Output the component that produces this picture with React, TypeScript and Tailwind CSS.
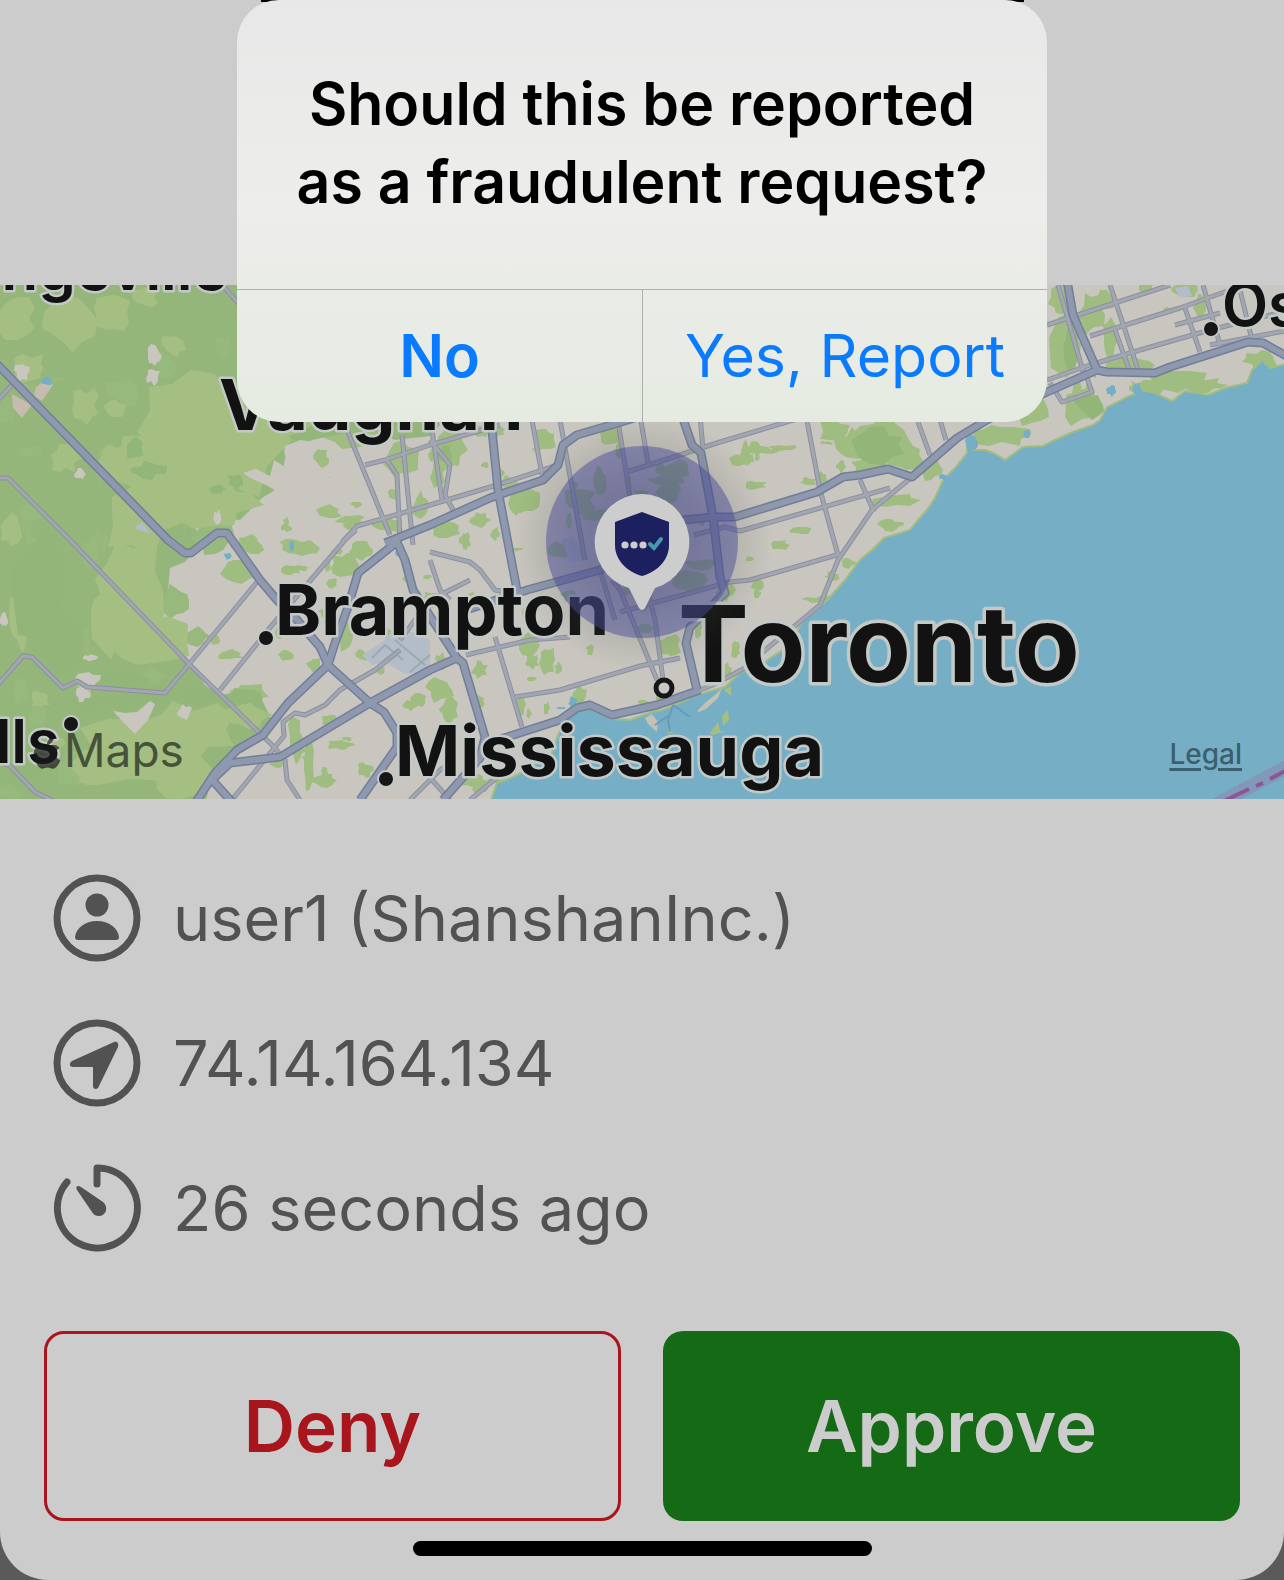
import type { ReactNode } from 'react';
import { FaApple } from 'react-icons/fa';

type Patch = [x: number, y: number, rx: number, ry: number];

const HIGHWAYS = [
  'M-5 362L168 540L185 553L191 553L217 533L227 533L260 580L277 600L297 620L320 647L328 665L370 703L384 712L397 733V747L360 800',
  'M457 658L413 590L405 560L397 542L358 573L348 607L335 643L328 665L288 703L263 735L237 750L215 773L196 802',
  'M232 802L214 782L209 778M212 780L230 763L280 757L370 703L430 670L457 658L463 663L485 737L480 758L443 800',
  'M385 543L430 525L490 498L507 492L543 480L558 465L563 445L577 435L618 423L660 410',
  'M490 410L498 490L508 543L517 590',
  'M460 612L527 590L600 570L650 535L683 520L713 517L735 517L817 492L843 477L860 475L888 469L912 477L957 438L987 420L1047 392L1097 370L1107 372L1155 373L1170 367L1248 342L1263 343L1290 358',
  'M1067 280L1073 315L1097 370',
  'M680 410L692 445L701 453L713 517L720 577L725 593L690 627L686 643L697 690',
  'M490 742L507 737L560 720L577 708L590 705L612 715L657 705L700 690',
];

const ROADS = [
  'M-5 478L8 478L20 490L70 540L190 665L274 747L285 760L287 780L300 800',
  'M-5 688L23 656L32 657L63 688L77 681L87 687L165 693L190 663L257 582',
  'M220 690L268 630L345 540L356 530',
  'M-5 760L10 766L35 792L60 804',
  'M-5 403L12 385',
  'M222 285L240 305',
  'M700 690L715 684L745 668L770 646L790 630L820 605L838 560L872 510L890 495L912 477',
  'M617 415L640 560L655 620L663 680M612 580L620 590L657 680',
  'M345 425L390 535M432 430L442 500M402 435L413 545M365 465L385 460L430 445L500 425',
  'M342 542L357 526L430 505L497 485L558 465M387 460L397 475L400 540',
  'M430 440L450 465L445 495L453 510M532 420L542 475',
  'M430 552L470 562L480 570L495 590L520 594M430 560L440 590L450 600',
  'M466 655L530 640L570 637M495 637L522 727M515 697L560 690L640 666L680 658',
  'M600 570L615 620M627 472L720 442L800 418M640 415L648 463M560 420L585 560',
  'M694 535L725 527L740 531L890 488M620 612L730 582L750 580L840 554',
  'M805 410L820 490L838 555M860 480L874 512M700 415L703 450M918 422L930 455M940 420L946 440',
  'M1047 380L1090 365L1140 350L1210 330L1290 310M1047 325L1170 285M1090 336L1180 308L1230 290',
  'M1110 285L1125 330L1138 370M1058 285L1085 378M1115 330L1130 372M1185 308L1200 352M1203 285L1220 345M1240 290L1252 340',
  'M1050 383L1062 402L1092 392L1085 372M1175 325L1220 313M1210 345L1290 330',
  'M400 650L375 670L340 690L325 705L305 715L295 713L283 722L284 736L240 790L230 802',
  'M410 800L440 770L455 760M432 780L450 800M470 800L500 775M400 640L430 600L470 580',
];

// farmland west of the city
const FIELDS: Patch[] = [
  [14, 318, 24, 22], [70, 320, 26, 32], [112, 312, 20, 22], [145, 298, 14, 10], [30, 368, 20, 14],
  [85, 405, 14, 18], [115, 408, 12, 10], [175, 345, 14, 12], [185, 420, 50, 52], [175, 470, 62, 45],
  [115, 460, 24, 20], [225, 440, 60, 70], [210, 505, 48, 28], [140, 520, 42, 40], [65, 458, 16, 16],
  [10, 530, 12, 16], [130, 590, 44, 58], [108, 618, 26, 38], [150, 640, 40, 32], [20, 620, 12, 32],
  [130, 755, 62, 38], [190, 730, 48, 32], [95, 770, 30, 20], [40, 700, 10, 10], [55, 745, 12, 8],
  [178, 775, 34, 25], [245, 715, 26, 14], [260, 430, 50, 22], [300, 410, 40, 30],
];

const WOODS: Patch[] = [
  [135, 448, 10, 14], [150, 470, 18, 9], [235, 481, 9, 8], [218, 489, 8, 6], [120, 678, 28, 6],
  [90, 705, 10, 8], [118, 702, 30, 6], [155, 698, 18, 7], [200, 696, 28, 8], [243, 697, 22, 9],
  [40, 590, 26, 60], [58, 640, 22, 34], [25, 760, 26, 30], [46, 570, 12, 40],
];

const CLEARINGS: Patch[] = [
  [154, 356, 8, 12], [153, 376, 7, 9], [22, 372, 8, 9], [80, 474, 6, 6], [218, 518, 5, 9],
  [88, 680, 14, 10], [82, 693, 8, 9], [185, 712, 7, 8], [4, 620, 5, 8], [90, 658, 7, 4],
];

const GREENS: Patch[] = [
  [355, 435, 35, 14], [400, 460, 20, 22], [450, 450, 16, 20], [437, 475, 8, 14], [325, 480, 12, 6],
  [328, 512, 14, 8], [350, 520, 15, 6], [385, 525, 20, 8], [420, 505, 8, 14], [445, 530, 16, 8],
  [525, 500, 20, 18], [510, 483, 10, 8], [545, 440, 12, 14], [610, 435, 12, 10], [578, 500, 18, 16],
  [600, 515, 20, 6], [600, 480, 8, 14], [670, 490, 14, 16], [677, 470, 14, 10], [665, 480, 20, 5],
  [690, 580, 18, 14], [700, 565, 20, 6], [560, 550, 12, 10], [650, 560, 8, 8], [670, 645, 12, 14],
  [725, 590, 10, 12], [745, 455, 6, 14], [760, 450, 18, 4], [785, 448, 16, 3], [755, 485, 12, 5],
  [835, 430, 18, 12], [850, 445, 14, 16], [780, 545, 10, 6], [800, 530, 12, 4], [880, 440, 30, 24],
  [905, 455, 22, 16], [870, 465, 18, 12], [930, 470, 12, 10], [895, 500, 26, 7], [890, 525, 14, 6],
  [1000, 435, 30, 12], [1030, 410, 22, 16], [1065, 345, 16, 30], [1080, 405, 22, 20], [1090, 315, 14, 22],
  [1060, 300, 12, 16], [1105, 300, 14, 10], [1110, 340, 8, 20], [1130, 365, 24, 10], [1175, 380, 32, 14],
  [1150, 388, 20, 8], [1205, 385, 22, 8], [1260, 360, 18, 10], [1185, 290, 14, 8], [1200, 305, 6, 12],
  [240, 570, 20, 14], [250, 545, 14, 10], [290, 570, 10, 5], [345, 565, 16, 14], [360, 550, 12, 10],
  [300, 548, 18, 9], [345, 635, 10, 16], [230, 655, 14, 6], [215, 640, 6, 5], [248, 692, 22, 9],
  [315, 665, 8, 8], [295, 740, 8, 22], [308, 765, 6, 26], [330, 720, 10, 6], [325, 780, 12, 8],
  [530, 645, 12, 18], [548, 660, 10, 14], [580, 695, 8, 12], [532, 662, 8, 8], [480, 670, 8, 10],
  [440, 690, 14, 12], [450, 710, 8, 14], [470, 780, 14, 8], [520, 705, 6, 10], [430, 600, 12, 8],
  [480, 785, 10, 8], [500, 780, 12, 4], [465, 540, 6, 10], [480, 520, 10, 8], [645, 628, 10, 6],
  [365, 770, 8, 8], [340, 745, 14, 5], [410, 705, 8, 5], [590, 650, 4, 6], [820, 600, 18, 4],
];

const PONDS: Patch[] = [
  [47, 381, 6, 4], [228, 556, 4, 4], [292, 546, 3, 6], [398, 553, 3, 4], [1111, 391, 6, 5],
  [1137, 389, 5, 6], [1027, 434, 4, 4], [943, 477, 4, 3], [972, 442, 7, 9], [573, 702, 5, 7], [561, 708, 5, 2],
];

function makeRandom(seed: number) {
  let s = seed;
  return () => {
    s = (s * 16807) % 2147483647;
    return s / 2147483647;
  };
}

const random = makeRandom(4711);

function outline([x, y, rx, ry]: Patch) {
  const points: string[] = [];
  const n = 13;
  for (let i = 0; i < n; i++) {
    const a = (i / n) * Math.PI * 2;
    const k = 0.6 + random() * 0.55;
    points.push(`${Math.round(x + Math.cos(a) * rx * k)} ${Math.round(y + Math.sin(a) * ry * k)}`);
  }
  return `M${points.join('L')}Z`;
}

const shape = (patches: Patch[]) => patches.map(outline).join('');

const scatter = (n: number, x0: number, x1: number, y0: number, y1: number, max: number) =>
  Array.from({ length: n }, (): Patch => [
    x0 + random() * (x1 - x0),
    y0 + random() * (y1 - y0),
    2 + random() * max,
    2 + random() * max,
  ]);

const fieldsPath = shape(FIELDS);
const woodsPath = shape(WOODS);
const clearingsPath = shape(CLEARINGS);
const greensPath = shape(GREENS);
const darkGreensPath = shape([[880, 445, 26, 18], [1090, 405, 16, 14], [1070, 350, 8, 22], [250, 695, 14, 8], [445, 455, 8, 10]]);
const pondsPath = shape(PONDS);
const parksPath = shape([
  ...scatter(110, 270, 860, 425, 790, 7),
  ...scatter(30, 860, 1284, 285, 480, 8),
]);
const texturePath = shape(scatter(40, 0, 235, 290, 795, 18));

const LAKE =
  'M1290 363L1270 368L1262 360L1252 370L1247 383L1225 388L1208 395L1185 391L1172 401L1155 393L1143 390L1133 383L1135 394L1127 397L1118 402L1107 407L1100 420L1093 425L1073 432L1055 440L1043 446L1023 447L1005 460L993 453L985 450L973 450L967 440L967 453L955 468L943 480L935 498L927 510L918 520L910 530L884 538L872 550L860 560L845 580L830 597L815 612L803 620L790 645L763 663L740 673L725 687L697 695L663 710L652 712L630 720L612 719L590 709L577 712L565 720L558 735L552 753L530 768L513 777L497 783L491 800H1290Z';

const labelClass = 'fill-[#121212] stroke-[#c3c9c6] [paint-order:stroke] [stroke-linejoin:round]';

function RequestMap() {
  return (
    <svg
      viewBox="0 285 1284 514"
      preserveAspectRatio="xMidYMid slice"
      role="img"
      aria-label="Map of the Toronto area"
      className="block h-[514px] w-full"
      fill="none"
    >
      <defs>
        <radialGradient id="pinShade">
          <stop offset="0.4" stopColor="#55534f" stopOpacity="0.32" />
          <stop offset="1" stopColor="#55534f" stopOpacity="0" />
        </radialGradient>
      </defs>
      <rect y="285" width="1284" height="514" fill="#c8c6bf" />
      <path d={parksPath} fill="#9fbd80" />
      <path d={greensPath} fill="#9fbd80" />
      <path d={darkGreensPath} fill="#92b578" />
      <path
        d="M0 285H237V420H445L430 436L395 440L375 432L345 433L312 440L285 458L283 470L262 480L275 490L262 498L240 520L222 518L195 525L200 545L185 562L170 568L168 590L176 600L157 622L172 638L190 662L205 685L225 698L262 700L272 720L262 735L237 750L215 773L195 800H0Z"
        fill="#94b67b"
      />
      <path d={texturePath} fill="#98b97e" />
      <path d={fieldsPath} fill="#a5bf82" />
      <path d={woodsPath} fill="#92b57a" />
      <path d={clearingsPath} fill="#c8c6bf" />
      <path d="M243 473L256 469L270 476L274 460L290 470L284 452L285 446L300 440L315 442L313 458L330 478L345 465L358 475L350 495L300 500L275 490L264 484L250 478Z" fill="#c8c6bf" />
      <path d="M113 711L125 713L137 712L150 701L155 704L148 720L135 734L123 722Z" fill="#c8c6bf" />
      <path d="M36 387L45 380L53 385L42 401L34 396ZM12 394L32 405L22 418L13 408Z" fill="#c5bbae" />
      <path d="M362 655L385 640L396 625L430 640V672L405 674L385 662L372 665Z" fill="#b2bdc8" />
      <path d="M1175 288L1188 286L1192 296L1180 298ZM135 527L142 522L150 533L138 530ZM562 540L572 536L590 560L570 562Z" fill="#b2bdc8" />
      <path d="M372 658L385 645L403 660M395 640L425 665M410 672L430 655" stroke="#9ba8b5" strokeWidth="2" />

      <path d={LAKE} fill="#76aec6" stroke="#9fbd80" strokeWidth="2" />
      <path d={pondsPath} fill="#76aec6" />
      <path d="M697 711L706 702L716 694L722 688L718 698L706 709L699 712ZM645 718L652 714L658 722L657 732L648 724Z" fill="#c2c1b4" />
      <path d="M722 716L728 710L729 720L723 726ZM710 733L718 722L720 731L727 731L712 735ZM724 690L731 686V696ZM668 730L674 732L668 734Z" fill="#a5bf82" />
      <path d="M673 705L668 720L670 732M673 705L690 717M668 716L655 725" stroke="#679bb8" strokeWidth="2" />

      <g strokeLinejoin="round">
        {ROADS.map((d) => (
          <path key={d} d={d} stroke="#8b90a0" strokeWidth="5" />
        ))}
        {ROADS.map((d) => (
          <path key={d} d={d} stroke="#a2a6b1" strokeWidth="3" />
        ))}
        {HIGHWAYS.map((d) => (
          <path key={d} d={d} stroke="#727e98" strokeWidth="9" />
        ))}
        {HIGHWAYS.map((d) => (
          <path key={d} d={d} stroke="#8e98ae" strokeWidth="6" />
        ))}
      </g>
      <path d="M1210 808L1300 760" stroke="#8298b8" strokeWidth="14" />
      <path d="M1218 804L1249 789M1256 786L1263 783M1270 779L1300 763" stroke="#8c5596" strokeWidth="4" />

      <g className={labelClass} fontFamily="Inter, sans-serif" fontWeight="700">
        <g strokeWidth="5" fontSize="60" fontWeight="600">
          <text x="228" y="290" textAnchor="end">Orangeville</text>
          <text x="1222" y="326">Oshawa</text>
          <text x="60" y="763" textAnchor="end">Hills</text>
        </g>
        <g strokeWidth="5" fontSize="70">
          <text x="219" y="430">Vaughan</text>
          <text x="275" y="635">Brampton</text>
          <text x="395" y="776">Mississauga</text>
        </g>
        <text x="678" y="682" fontSize="106" strokeWidth="7">Toronto</text>
      </g>
      <g fill="#161616" stroke="#c3c9c6" strokeWidth="2">
        <circle cx="266" cy="638" r="8" />
        <circle cx="71" cy="724" r="8" />
        <circle cx="386" cy="779" r="8" />
        <circle cx="1211" cy="329" r="8" />
      </g>
      <circle cx="664" cy="688" r="8" fill="#c8c8c5" stroke="#161616" strokeWidth="5" />

      <FaApple x="29" y="735" size={36} className="text-[#1a1a1a]/70" />
      <text x="64" y="767" fontSize="46" fontFamily="Inter, sans-serif" fill="#46523a">
        Maps
      </text>

      <circle cx="642" cy="542" r="130" fill="url(#pinShade)" />
      <circle cx="642" cy="542" r="96" fill="#454a98" fillOpacity="0.48" />
      <path d="M642 494a48 48 0 0 1 13 94L645 608Q642 612 639 608L629 588a48 48 0 0 1 13 -94Z" fill="#cdcdcd" />
      <path d="M642 512L669 522V545C669 561 656 572 642 576C628 572 615 561 615 545V522Z" fill="#1c205e" />
      <g fill="#cdcdcd">
        <circle cx="625" cy="545" r="3.6" />
        <circle cx="634" cy="545" r="3.6" />
        <circle cx="643" cy="545" r="3.6" />
      </g>
      <path d="M650 544L654 548L661 539" stroke="#459bab" strokeWidth="4" strokeLinecap="round" />
    </svg>
  );
}

function UserIcon() {
  return (
    <svg viewBox="0 0 88 88" className="size-[88px] shrink-0" fill="currentColor" aria-hidden="true">
      <circle cx="44" cy="44" r="40" fill="none" stroke="currentColor" strokeWidth="7" />
      <circle cx="44" cy="31" r="11.5" />
      <path d="M25 66Q22 66 22 63C23 54 32 47 44 47S65 54 66 63Q66 66 63 66Z" />
    </svg>
  );
}

function LocationIcon() {
  return (
    <svg viewBox="0 0 88 88" className="size-[88px] shrink-0" fill="currentColor" aria-hidden="true">
      <circle cx="44" cy="44" r="40" fill="none" stroke="currentColor" strokeWidth="7" />
      <path d="M61 23C64 22 66 24 65 28L46 67C45 71 40 71 40 67V48H20C16 48 16 44 19 42Z" />
    </svg>
  );
}

function TimerIcon() {
  return (
    <svg viewBox="0 0 88 88" className="size-[88px] shrink-0" fill="none" aria-hidden="true">
      <path
        d="M44 20V4A40 40 0 1 1 14 18"
        stroke="currentColor"
        strokeWidth="7"
        strokeLinecap="round"
        strokeLinejoin="round"
      />
      <path d="M24 26C22 22 25 21 28 23L50 38C56 43 53 52 46 52C43 52 41 51 39 48Z" fill="currentColor" />
    </svg>
  );
}

function DetailRow({ icon, children }: { icon: ReactNode; children: ReactNode }) {
  return (
    <li className="flex h-[88px] items-center gap-8">
      {icon}
      <span className="text-[63px] leading-[80px]">{children}</span>
    </li>
  );
}

function ReportDialog() {
  return (
    <div
      role="alertdialog"
      aria-labelledby="report-title"
      className="absolute inset-x-0 top-0 mx-auto w-[810px] max-w-full overflow-hidden rounded-[42px] bg-linear-to-b from-[#e8e8e8] via-[#ededeb] to-[#e5ebe1]"
    >
      <div className="flex h-[289px] justify-center pt-[65px]">
        <h1 id="report-title" className="text-center text-[59px] leading-[78px] font-semibold text-black">
          Should this be reported
          <br />
          as a fraudulent request?
        </h1>
      </div>
      <div className="grid h-[133px] grid-cols-2 border-t border-[#adb0aa] text-[59px] text-[#0a7aff]">
        <button type="button" className="font-semibold">
          No
        </button>
        <button type="button" className="border-l border-[#adb0aa]">
          Yes, Report
        </button>
      </div>
    </div>
  );
}

export default function App() {
  return (
    <div className="bg-[#5a5a5a] font-[Inter,sans-serif]">
      <main className="relative overflow-hidden rounded-b-[48px] bg-[#cccccc] pb-6">
        <div className="h-[285px]">
          <div className="mx-auto h-[2px] w-[763px] max-w-full bg-black" />
        </div>
        <RequestMap />

        <ul className="flex flex-col gap-[57px] px-[53px] pt-[75px] text-[#525252]">
          <DetailRow icon={<UserIcon />}>user1 (ShanshanInc.)</DetailRow>
          <DetailRow icon={<LocationIcon />}>74.14.164.134</DetailRow>
          <DetailRow icon={<TimerIcon />}>26 seconds ago</DetailRow>
        </ul>

        <div className="mt-[79px] grid grid-cols-2 gap-[42px] px-[44px] text-[71px] font-semibold">
          <button type="button" className="h-[190px] rounded-[20px] border-[3px] border-[#a9151d] text-[#a9151d]">
            Deny
          </button>
          <button type="button" className="h-[190px] rounded-[20px] bg-[#146a15] text-[#cccccc]">
            Approve
          </button>
        </div>
        <div className="mx-auto mt-5 h-[15px] w-[459px] rounded-full bg-black" />

        <ReportDialog />
        <a
          href="#legal"
          className="absolute top-[736px] right-[42px] text-[28px] leading-9 font-medium text-[#3c5f6e] underline decoration-[3px] underline-offset-4"
        >
          Legal
        </a>
      </main>
    </div>
  );
}
